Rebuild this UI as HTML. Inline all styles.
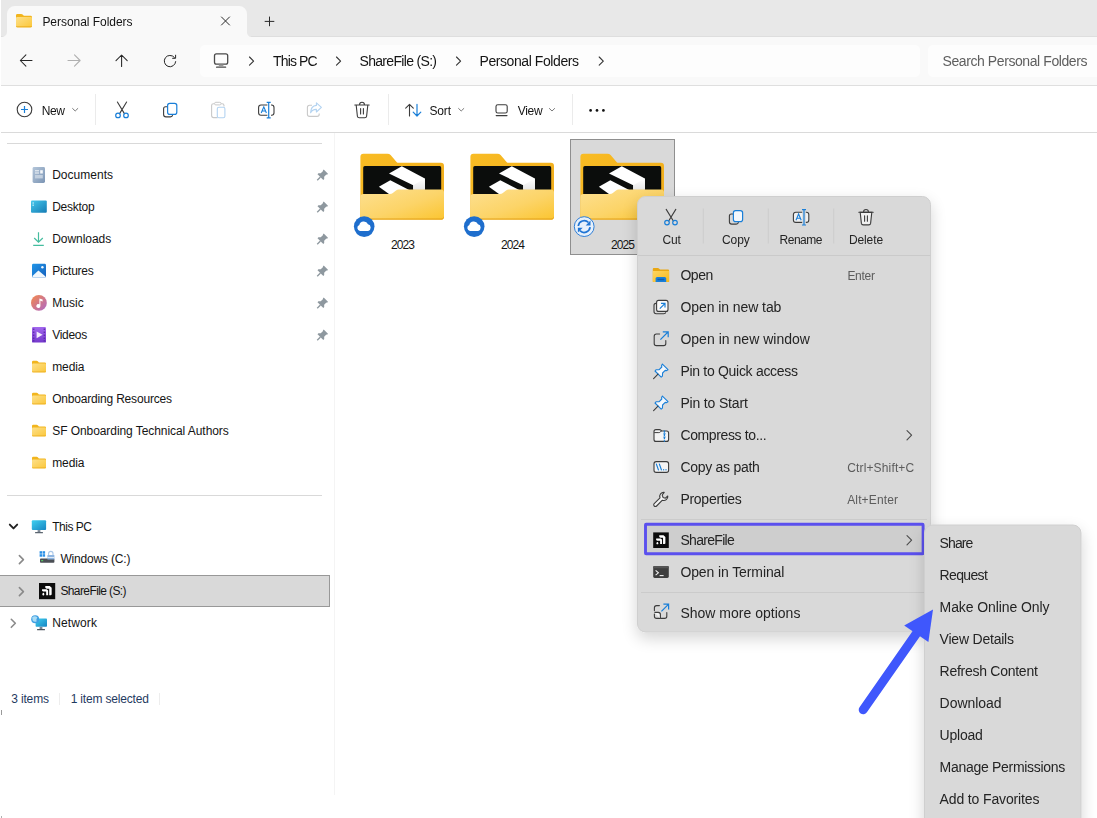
<!DOCTYPE html>
<html><head><meta charset="utf-8"><title>Personal Folders</title>
<style>
*{box-sizing:border-box;margin:0;padding:0}
html,body{width:1097px;height:818px;overflow:hidden;background:#fff}
body{font-family:"Liberation Sans",sans-serif;position:relative}
.t{position:absolute;white-space:nowrap}
svg.L{position:absolute;left:0;top:0;width:1097px;height:818px;overflow:hidden}
.ly{position:absolute;left:0;top:0;width:1097px;height:818px}
</style></head><body>
<div class="ly">
<svg class="L" viewBox="0 0 1097 818">
<defs>
<linearGradient id="gFold" x1="0" y1="0" x2="1" y2="1"><stop offset="0" stop-color="#fde08a"/><stop offset="1" stop-color="#fbc73a"/></linearGradient>
<linearGradient id="gBack" x1="0" y1="0" x2="1" y2="1"><stop offset="0" stop-color="#f9bc24"/><stop offset="1" stop-color="#eda91a"/></linearGradient>
<linearGradient id="gFront" x1="0" y1="0" x2="1" y2="1"><stop offset="0" stop-color="#fde091"/><stop offset=".55" stop-color="#fcd468"/><stop offset="1" stop-color="#fbc530"/></linearGradient>
<linearGradient id="gLogoSh" x1="0" y1="0" x2="0" y2="1"><stop offset="0" stop-color="#fff"/><stop offset="1" stop-color="#e6e6e6"/></linearGradient>
<linearGradient id="gDoc" x1="0" y1="0" x2="1" y2="1"><stop offset="0" stop-color="#b4c6da"/><stop offset="1" stop-color="#7c95b4"/></linearGradient>
<linearGradient id="gDesk" x1="0" y1="0" x2="1" y2="1"><stop offset="0" stop-color="#45c8ec"/><stop offset="1" stop-color="#157bb4"/></linearGradient>
<linearGradient id="gPic" x1="0" y1="0" x2="1" y2="1"><stop offset="0" stop-color="#2196e8"/><stop offset="1" stop-color="#1560bd"/></linearGradient>
<linearGradient id="gMus" x1="0" y1="0" x2="1" y2="1"><stop offset="0" stop-color="#f6894a"/><stop offset="1" stop-color="#ad68c8"/></linearGradient>
<linearGradient id="gVid" x1="0" y1="0" x2="0" y2="1"><stop offset="0" stop-color="#a268ee"/><stop offset="1" stop-color="#7438cc"/></linearGradient>
<linearGradient id="gMon" x1="0" y1="0" x2="1" y2="1"><stop offset="0" stop-color="#3fd0f0"/><stop offset="1" stop-color="#1785c2"/></linearGradient>
</defs>
<rect x="0" y="0" width="1097" height="818" fill="#fff"/>
<rect x="1" y="0" width="1096" height="36" fill="#e8e8e8"/>
<rect x="1" y="36" width="1096" height="1" fill="#dedede"/>
<rect x="1" y="37" width="1096" height="48" fill="#f9f9f9"/>
<path d="M2 37 A5 5 0 0 0 7 32 V14 A8 8 0 0 1 15 6 H239 A8 8 0 0 1 247 14 V32.5 A4.2 4.2 0 0 0 251.2 36.7 V37Z" fill="#f9f9f9"/>
<rect x="1" y="85" width="1096" height="1" fill="#dfdfdf"/>
<rect x="1" y="132" width="1096" height="1" fill="#dadada"/>
<rect x="200" y="45" width="720" height="32" rx="5" fill="#fdfdfd"/>
<rect x="928" y="45" width="180" height="32" rx="5" fill="#fdfdfd"/>
<g transform="translate(16,14) scale(1.1428571428571428)">
<path d="M0 1.2 Q0 0 1.2 0 H4.6 Q5.3 0 5.8 .5 L6.9 1.6 H12.8 Q14 1.6 14 2.8 V10.3 Q14 11.5 12.8 11.5 H1.2 Q0 11.5 0 10.3Z" fill="#f2b51d"/>
<path d="M0 3.6 Q0 2.6 1 2.6 H13 Q14 2.6 14 3.6 V10.3 Q14 11.5 12.8 11.5 H1.2 Q0 11.5 0 10.3Z" fill="url(#gFold)"/>
<rect x="0" y="10.7" width="14" height=".8" rx=".4" fill="#e8a818" opacity=".8"/>
</g>
<path d="M221.2 16.7 L229.8 25.3 M229.8 16.7 L221.2 25.3" stroke="#2a2a2a" stroke-width="1" fill="none"/>
<path d="M264.7 21.4 H274.3 M269.5 16.6 V26.2" stroke="#2a2a2a" stroke-width="1" fill="none"/>
<g fill="none" stroke="#262626" stroke-width="1.05" stroke-linecap="round" stroke-linejoin="round">
<path d="M32 60.5 H20.4 M25.9 54.9 L20.3 60.5 L25.9 66.1"/>
<path d="M121.6 66.4 V55 M116 60.6 L121.6 55 L127.2 60.6"/>
<path d="M175.7 61.6 A5.7 5.7 0 1 1 174.4 57.4" stroke-width="1"/>
<path d="M175.6 55.2 V58.3 H172.6" stroke-width="1"/>
</g>
<path d="M68 60.5 H80 M74.5 54.9 L80.1 60.5 L74.5 66.1" fill="none" stroke="#b0b0b0" stroke-width="1.1" stroke-linecap="round" stroke-linejoin="round"/>
<g fill="none" stroke="#4a4a4a" stroke-width="1.3" stroke-linecap="round"><rect x="214.5" y="53.8" width="13.2" height="10.3" rx="1.9"/><path d="M216.6 67.2 H225.6"/></g>
<rect x="218.8" y="64.6" width="4.6" height="2.2" fill="#9a9a9a"/>
<path d="M249.5 57 L253.6 61.1 L249.5 65.2" fill="none" stroke="#333" stroke-width="1.1" stroke-linecap="round" stroke-linejoin="round"/>
<path d="M336.5 57 L340.6 61.1 L336.5 65.2" fill="none" stroke="#333" stroke-width="1.1" stroke-linecap="round" stroke-linejoin="round"/>
<path d="M456.5 57 L460.6 61.1 L456.5 65.2" fill="none" stroke="#333" stroke-width="1.1" stroke-linecap="round" stroke-linejoin="round"/>
<path d="M599.2 57 L603.3000000000001 61.1 L599.2 65.2" fill="none" stroke="#333" stroke-width="1.1" stroke-linecap="round" stroke-linejoin="round"/>
<circle cx="24.5" cy="109.5" r="7.3" fill="none" stroke="#3c3c3c" stroke-width="1.1"/>
<path d="M21 109.5 H28 M24.5 106 V113" stroke="#1a7fd8" stroke-width="1.2" fill="none"/>
<path d="M72.60000000000001 108.5 L75.2 111 L77.8 108.5" fill="none" stroke="#7a7a7a" stroke-width="1" stroke-linecap="round" stroke-linejoin="round"/>
<path d="M458.59999999999997 108.5 L461.2 111 L463.8 108.5" fill="none" stroke="#7a7a7a" stroke-width="1" stroke-linecap="round" stroke-linejoin="round"/>
<path d="M549.4 108.5 L552 111 L554.6 108.5" fill="none" stroke="#7a7a7a" stroke-width="1" stroke-linecap="round" stroke-linejoin="round"/>
<rect x="95.0" y="94" width="1" height="31" fill="#ebebeb"/>
<rect x="388.0" y="94" width="1" height="31" fill="#ebebeb"/>
<rect x="572.0" y="94" width="1" height="31" fill="#ebebeb"/>
<path d="M117.4 102 L124.4 113.6 M126.6 102 L119.6 113.6" stroke="#3c3c3c" stroke-width="1.1" fill="none" stroke-linecap="round"/>
<circle cx="118" cy="115.4" r="2.3" fill="none" stroke="#1a7fd8" stroke-width="1.2"/><circle cx="126" cy="115.4" r="2.3" fill="none" stroke="#1a7fd8" stroke-width="1.2"/>
<path d="M166.8 106.8 H165.6 Q163.6 106.8 163.6 108.8 V114.6 Q163.6 116.9 165.9 116.9 H170.4 Q172.4 116.9 172.6 115" fill="none" stroke="#3c3c3c" stroke-width="1.1" stroke-linecap="round"/>
<rect x="167.6" y="103.4" width="9.2" height="11" rx="2.2" fill="none" stroke="#1a7fd8" stroke-width="1.2"/>
<path d="M217.5 117.6 H213.6 Q211.6 117.6 211.6 115.6 V105.6 Q211.6 103.8 213.4 103.8 H214.4 M221.2 103.8 H222.2 Q224 103.8 224 105.6 V106.5" fill="none" stroke="#c9c9c9" stroke-width="1.1"/>
<rect x="214.6" y="102.3" width="6.4" height="2.6" rx="1.2" fill="none" stroke="#c9c9c9" stroke-width="1"/>
<rect x="217.3" y="107.2" width="7.6" height="10.6" rx="1.6" fill="none" stroke="#b3d3f1" stroke-width="1.1"/>
<path d="M267.4 105 H261 Q258.6 105 258.6 107.4 V112.8 Q258.6 115.2 261 115.2 H267.4 M271 105 H271.6 Q274 105 274 107.4 V112.8 Q274 115.2 271.6 115.2 H271" fill="none" stroke="#3c3c3c" stroke-width="1.1"/>
<path d="M268.7 102.4 V117.8 M266.7 102.4 H270.7 M266.7 117.8 H270.7" fill="none" stroke="#1a7fd8" stroke-width="1.2"/>
<path d="M261.2 113 L263.8 106.8 L266.4 113 M262.1 111 H265.5" fill="none" stroke="#1a7fd8" stroke-width="1.1"/>
<path d="M312 105.2 H309.6 Q307.4 105.2 307.4 107.4 V114.2 Q307.4 116.4 309.6 116.4 H317 Q319.2 116.4 319.2 114.2 V113.6" fill="none" stroke="#c9c9c9" stroke-width="1.1"/>
<path d="M316.4 102.8 L321.4 107.4 L316.4 112 V109.4 Q312.4 109.2 310.6 112.8 Q310.8 105.8 316.4 105.4Z" fill="none" stroke="#b3d3f1" stroke-width="1.1" stroke-linejoin="round"/>
<g fill="none" stroke="#3c3c3c" stroke-width="1.1" stroke-linecap="round"><path d="M354.8 105 H369.2 M359.6 104.6 Q359.6 102.3 362 102.3 Q364.4 102.3 364.4 104.6 M356.2 105.2 L357.4 116.2 Q357.6 117.7 359.2 117.7 H364.8 Q366.4 117.7 366.6 116.2 L367.8 105.2 M360.6 108.6 V114 M363.4 108.6 V114"/></g>
<path d="M409.5 116 V104.4 M405.7 108.2 L409.5 104.4 L413.3 108.2" fill="none" stroke="#3c3c3c" stroke-width="1.1" stroke-linecap="round" stroke-linejoin="round"/>
<path d="M417 104.4 V116 M413.2 112.2 L417 116 L420.8 112.2" fill="none" stroke="#1a7fd8" stroke-width="1.2" stroke-linecap="round" stroke-linejoin="round"/>
<rect x="496" y="104.8" width="11.2" height="8.2" rx="1.8" fill="none" stroke="#3c3c3c" stroke-width="1.1"/><path d="M496.2 115.6 H507" stroke="#3c3c3c" stroke-width="1.1" fill="none" stroke-linecap="round"/>
<circle cx="590.6" cy="110.4" r="1.35" fill="#111"/>
<circle cx="597" cy="110.4" r="1.35" fill="#111"/>
<circle cx="603.4" cy="110.4" r="1.35" fill="#111"/>
<rect x="7" y="143" width="315" height="1" fill="#d9d9d9"/>
<rect x="7" y="495" width="315" height="1" fill="#d9d9d9"/>
<rect x="334" y="133" width="1" height="662" fill="#f4f4f4"/>
<rect x="1" y="816" width="1" height="2" fill="#b0b0b0"/>
<rect x="-1" y="575.5" width="330.5" height="31" fill="#d9d9d9" stroke="#989898" stroke-width="1"/>
<rect x="32.6" y="167" width="12.4" height="16" rx="1.4" fill="url(#gDoc)"/>
<path d="M35 170.8 H39 M35 173 H39" stroke="#f4f7fa" stroke-width="1" fill="none"/><rect x="40.2" y="170.2" width="2.6" height="3.3" fill="#f4f7fa"/><rect x="35" y="175" width="7.8" height="3.4" fill="#c3d0df"/>
<rect x="31" y="200.6" width="15.8" height="12.2" rx="1" fill="url(#gDesk)"/><rect x="32.4" y="202.4" width="1.6" height="1.2" fill="#b7ecfa"/><rect x="32.4" y="204.6" width="1.6" height="1.2" fill="#b7ecfa"/>
<path d="M38.5 232.3 V242 M34.2 238 L38.5 242.2 L42.8 238 M33.2 245.4 H43.8" fill="none" stroke="#45bd9f" stroke-width="1.2"/>
<rect x="32" y="263.8" width="14" height="13.8" rx="1.4" fill="url(#gPic)"/><path d="M32.4 276 L38.4 270.6 L45.6 276.6 Q45.4 277.6 44.6 277.6 H33.4 Q32.4 277.6 32.4 276Z" fill="#f2f8fd"/><circle cx="42.4" cy="267.2" r="1.2" fill="#f2f8fd"/>
<circle cx="38.9" cy="302.9" r="7.9" fill="url(#gMus)"/><path d="M39.4 298.6 L42.6 299.6 V301.4 L40.4 300.8 V306 A2 2 0 1 1 39.4 304.3Z" fill="#fff"/>
<rect x="32" y="327" width="14" height="15.6" rx="1.2" fill="url(#gVid)"/><path d="M36.6 331.4 L42.6 334.8 L36.6 338.2Z" fill="#f3ecfd"/>
<rect x="32.9" y="328.6" width="1.5" height="1.3" fill="#5b2aa8"/><rect x="43.6" y="328.6" width="1.5" height="1.3" fill="#5b2aa8"/>
<rect x="32.9" y="331.6" width="1.5" height="1.3" fill="#5b2aa8"/><rect x="43.6" y="331.6" width="1.5" height="1.3" fill="#5b2aa8"/>
<rect x="32.9" y="334.6" width="1.5" height="1.3" fill="#5b2aa8"/><rect x="43.6" y="334.6" width="1.5" height="1.3" fill="#5b2aa8"/>
<rect x="32.9" y="337.6" width="1.5" height="1.3" fill="#5b2aa8"/><rect x="43.6" y="337.6" width="1.5" height="1.3" fill="#5b2aa8"/>
<rect x="32.9" y="340.2" width="1.5" height="1.3" fill="#5b2aa8"/><rect x="43.6" y="340.2" width="1.5" height="1.3" fill="#5b2aa8"/>
<g transform="translate(32,360.8) scale(1.0)">
<path d="M0 1.2 Q0 0 1.2 0 H4.6 Q5.3 0 5.8 .5 L6.9 1.6 H12.8 Q14 1.6 14 2.8 V10.3 Q14 11.5 12.8 11.5 H1.2 Q0 11.5 0 10.3Z" fill="#f2b51d"/>
<path d="M0 3.6 Q0 2.6 1 2.6 H13 Q14 2.6 14 3.6 V10.3 Q14 11.5 12.8 11.5 H1.2 Q0 11.5 0 10.3Z" fill="url(#gFold)"/>
<rect x="0" y="10.7" width="14" height=".8" rx=".4" fill="#e8a818" opacity=".8"/>
</g>
<g transform="translate(32,392.8) scale(1.0)">
<path d="M0 1.2 Q0 0 1.2 0 H4.6 Q5.3 0 5.8 .5 L6.9 1.6 H12.8 Q14 1.6 14 2.8 V10.3 Q14 11.5 12.8 11.5 H1.2 Q0 11.5 0 10.3Z" fill="#f2b51d"/>
<path d="M0 3.6 Q0 2.6 1 2.6 H13 Q14 2.6 14 3.6 V10.3 Q14 11.5 12.8 11.5 H1.2 Q0 11.5 0 10.3Z" fill="url(#gFold)"/>
<rect x="0" y="10.7" width="14" height=".8" rx=".4" fill="#e8a818" opacity=".8"/>
</g>
<g transform="translate(32,424.8) scale(1.0)">
<path d="M0 1.2 Q0 0 1.2 0 H4.6 Q5.3 0 5.8 .5 L6.9 1.6 H12.8 Q14 1.6 14 2.8 V10.3 Q14 11.5 12.8 11.5 H1.2 Q0 11.5 0 10.3Z" fill="#f2b51d"/>
<path d="M0 3.6 Q0 2.6 1 2.6 H13 Q14 2.6 14 3.6 V10.3 Q14 11.5 12.8 11.5 H1.2 Q0 11.5 0 10.3Z" fill="url(#gFold)"/>
<rect x="0" y="10.7" width="14" height=".8" rx=".4" fill="#e8a818" opacity=".8"/>
</g>
<g transform="translate(32,456.8) scale(1.0)">
<path d="M0 1.2 Q0 0 1.2 0 H4.6 Q5.3 0 5.8 .5 L6.9 1.6 H12.8 Q14 1.6 14 2.8 V10.3 Q14 11.5 12.8 11.5 H1.2 Q0 11.5 0 10.3Z" fill="#f2b51d"/>
<path d="M0 3.6 Q0 2.6 1 2.6 H13 Q14 2.6 14 3.6 V10.3 Q14 11.5 12.8 11.5 H1.2 Q0 11.5 0 10.3Z" fill="url(#gFold)"/>
<rect x="0" y="10.7" width="14" height=".8" rx=".4" fill="#e8a818" opacity=".8"/>
</g>
<g transform="translate(321.6,175.9) rotate(45)" fill="#8e989f">
<path d="M-3 -6 H3 V-4.8 L2.4 -4.4 V-1.2 L4.1 .4 V1.7 H-4.1 V.4 L-2.4 -1.2 V-4.4 L-3 -4.8Z"/>
<rect x="-.65" y="1.6" width="1.3" height="4.6"/>
</g>
<g transform="translate(321.6,207.9) rotate(45)" fill="#8e989f">
<path d="M-3 -6 H3 V-4.8 L2.4 -4.4 V-1.2 L4.1 .4 V1.7 H-4.1 V.4 L-2.4 -1.2 V-4.4 L-3 -4.8Z"/>
<rect x="-.65" y="1.6" width="1.3" height="4.6"/>
</g>
<g transform="translate(321.6,239.9) rotate(45)" fill="#8e989f">
<path d="M-3 -6 H3 V-4.8 L2.4 -4.4 V-1.2 L4.1 .4 V1.7 H-4.1 V.4 L-2.4 -1.2 V-4.4 L-3 -4.8Z"/>
<rect x="-.65" y="1.6" width="1.3" height="4.6"/>
</g>
<g transform="translate(321.6,271.90000000000003) rotate(45)" fill="#8e989f">
<path d="M-3 -6 H3 V-4.8 L2.4 -4.4 V-1.2 L4.1 .4 V1.7 H-4.1 V.4 L-2.4 -1.2 V-4.4 L-3 -4.8Z"/>
<rect x="-.65" y="1.6" width="1.3" height="4.6"/>
</g>
<g transform="translate(321.6,303.90000000000003) rotate(45)" fill="#8e989f">
<path d="M-3 -6 H3 V-4.8 L2.4 -4.4 V-1.2 L4.1 .4 V1.7 H-4.1 V.4 L-2.4 -1.2 V-4.4 L-3 -4.8Z"/>
<rect x="-.65" y="1.6" width="1.3" height="4.6"/>
</g>
<g transform="translate(321.6,335.90000000000003) rotate(45)" fill="#8e989f">
<path d="M-3 -6 H3 V-4.8 L2.4 -4.4 V-1.2 L4.1 .4 V1.7 H-4.1 V.4 L-2.4 -1.2 V-4.4 L-3 -4.8Z"/>
<rect x="-.65" y="1.6" width="1.3" height="4.6"/>
</g>
<path d="M9.8 524.6 L13.5 528.4 L17.2 524.6" fill="none" stroke="#222" stroke-width="1.9" stroke-linecap="round" stroke-linejoin="round"/>
<path d="M19.4 555.6 L23.4 559.6 L19.4 563.6" fill="none" stroke="#8a8a8a" stroke-width="1.6" stroke-linecap="round" stroke-linejoin="round"/>
<path d="M19.4 587.6 L23.4 591.6 L19.4 595.6" fill="none" stroke="#8a8a8a" stroke-width="1.6" stroke-linecap="round" stroke-linejoin="round"/>
<path d="M11.3 619.3 L15.3 623.3 L11.3 627.3" fill="none" stroke="#8a8a8a" stroke-width="1.6" stroke-linecap="round" stroke-linejoin="round"/>
<rect x="31.8" y="520.3" width="14.3" height="9.8" rx="1" fill="url(#gMon)"/><rect x="37.6" y="530.1" width="2.8" height="2" fill="#7b8794"/><rect x="35" y="532" width="8" height="1.2" rx=".5" fill="#5c6670"/>
<rect x="39.6" y="551.2" width="2.5" height="2.5" fill="#2a8fe6"/><rect x="42.6" y="551.2" width="2.5" height="2.5" fill="#2a8fe6"/><rect x="39.6" y="554.2" width="2.5" height="2.5" fill="#2a8fe6"/><rect x="42.6" y="554.2" width="2.5" height="2.5" fill="#2a8fe6"/>
<rect x="40" y="558.6" width="14.4" height="4.2" rx=".8" fill="#4b4f55"/><rect x="41.2" y="560.2" width="2" height="1" fill="#5fe06a"/>
<path d="M48.6 555 V553.6 A2.2 2.2 0 0 1 53 553.6 V555" fill="none" stroke="#a9c7e8" stroke-width="1.1"/><rect x="47.4" y="555" width="7" height="4.6" rx=".6" fill="#8fb6e2"/><rect x="47.4" y="557" width="7" height="1" fill="#dfeaf6"/>
<g transform="translate(39,583) scale(1.0125)"><rect width="16" height="16" fill="#0c0c0c"/>
<path d="M6.2 2.9 H10.6 L12.5 4.6 V11.4 L11.7 12 H10.1 V5.6 H7.5 L6.2 4.6Z" fill="#fff"/>
<path d="M3 6.2 H7.6 L9 7.4 V12 H7.1 V8.5 H4 L3 7.7Z" fill="#fff"/>
<ellipse cx="4.3" cy="11" rx=".9" ry="1.25" fill="#fff"/></g>
<rect x="35.6" y="618.4" width="11.4" height="8.4" rx=".8" fill="url(#gMon)"/><rect x="39.6" y="626.8" width="2.8" height="2.2" fill="#7b8794"/><rect x="37" y="629" width="8" height="1.2" rx=".5" fill="#4c565f"/>
<circle cx="35.2" cy="619.2" r="4" fill="#3f9fe2"/><path d="M32.2 617.2 Q35 615.4 37.4 617.4 Q35.8 619 36.6 621.6 Q34 622.4 32.6 620.6Z" fill="#a9dcf5"/>
<rect x="59" y="693" width="1" height="12" fill="#ededed"/><rect x="159" y="693" width="1" height="12" fill="#ededed"/>
<rect x="1" y="710" width="1" height="5" fill="#9a9a9a"/>
<rect x="570.5" y="139.5" width="104" height="115" fill="#d9d9d9" stroke="#8f8f8f" stroke-width="1"/>
<g transform="translate(360.4,153.7)">
<path d="M0 3 Q0 0 3 0 H27 Q29 0 30.2 1.4 L36.4 8.6 Q37 9.1 38 9.1 H80.5 Q83.6 9.1 83.6 12.2 V62.7 Q83.6 65.8 80.5 65.8 H3 Q0 65.8 0 62.7Z" fill="url(#gBack)"/>
<rect x="2.8" y="12.4" width="78" height="40" rx="1.6" fill="#0b0d0c"/>
<path d="M41.4 12.6 L64.5 24.9 V36 H52.8 V31.6 L28.6 19.8Z" fill="#fff"/>
<path d="M29.9 26.5 L48.8 36.3 L29.6 41 L18.5 33Z" fill="#fff"/>
<path d="M52.8 31.6 L64.5 24.9 V36 H52.8Z" fill="url(#gLogoSh)"/>
<path d="M0 43.5 Q0 40.4 3 40.4 H29.5 Q31.2 40.4 32.4 39.4 L35.6 36.7 Q36.8 35.7 38.5 35.7 H80.5 Q83.6 35.7 83.6 38.8 V62.7 Q83.6 65.8 80.5 65.8 H3 Q0 65.8 0 62.7Z" fill="url(#gFront)"/>
<path d="M0 62 V62.7 Q0 65.8 3 65.8 H80.5 Q83.6 65.8 83.6 62.7 V62 Q83.6 64.8 80.5 64.8 H3 Q0 64.8 0 62Z" fill="#e3a21a"/>
</g><circle cx="364.2" cy="226.6" r="10.3" fill="#1e6ecd"/>
<path transform="translate(364.2,226.6)" d="M-4.2 4.3 A3 3 0 0 1 -4.9 -1.5 A4.6 4.6 0 0 1 3.8 -2.3 A3.4 3.4 0 0 1 4 4.3Z" fill="#fff"/>
<g transform="translate(470.4,153.7)">
<path d="M0 3 Q0 0 3 0 H27 Q29 0 30.2 1.4 L36.4 8.6 Q37 9.1 38 9.1 H80.5 Q83.6 9.1 83.6 12.2 V62.7 Q83.6 65.8 80.5 65.8 H3 Q0 65.8 0 62.7Z" fill="url(#gBack)"/>
<rect x="2.8" y="12.4" width="78" height="40" rx="1.6" fill="#0b0d0c"/>
<path d="M41.4 12.6 L64.5 24.9 V36 H52.8 V31.6 L28.6 19.8Z" fill="#fff"/>
<path d="M29.9 26.5 L48.8 36.3 L29.6 41 L18.5 33Z" fill="#fff"/>
<path d="M52.8 31.6 L64.5 24.9 V36 H52.8Z" fill="url(#gLogoSh)"/>
<path d="M0 43.5 Q0 40.4 3 40.4 H29.5 Q31.2 40.4 32.4 39.4 L35.6 36.7 Q36.8 35.7 38.5 35.7 H80.5 Q83.6 35.7 83.6 38.8 V62.7 Q83.6 65.8 80.5 65.8 H3 Q0 65.8 0 62.7Z" fill="url(#gFront)"/>
<path d="M0 62 V62.7 Q0 65.8 3 65.8 H80.5 Q83.6 65.8 83.6 62.7 V62 Q83.6 64.8 80.5 64.8 H3 Q0 64.8 0 62Z" fill="#e3a21a"/>
</g><circle cx="474.2" cy="226.6" r="10.3" fill="#1e6ecd"/>
<path transform="translate(474.2,226.6)" d="M-4.2 4.3 A3 3 0 0 1 -4.9 -1.5 A4.6 4.6 0 0 1 3.8 -2.3 A3.4 3.4 0 0 1 4 4.3Z" fill="#fff"/>
<g transform="translate(580.4,153.7)">
<path d="M0 3 Q0 0 3 0 H27 Q29 0 30.2 1.4 L36.4 8.6 Q37 9.1 38 9.1 H80.5 Q83.6 9.1 83.6 12.2 V62.7 Q83.6 65.8 80.5 65.8 H3 Q0 65.8 0 62.7Z" fill="url(#gBack)"/>
<rect x="2.8" y="12.4" width="78" height="40" rx="1.6" fill="#0b0d0c"/>
<path d="M41.4 12.6 L64.5 24.9 V36 H52.8 V31.6 L28.6 19.8Z" fill="#fff"/>
<path d="M29.9 26.5 L48.8 36.3 L29.6 41 L18.5 33Z" fill="#fff"/>
<path d="M52.8 31.6 L64.5 24.9 V36 H52.8Z" fill="url(#gLogoSh)"/>
<path d="M0 43.5 Q0 40.4 3 40.4 H29.5 Q31.2 40.4 32.4 39.4 L35.6 36.7 Q36.8 35.7 38.5 35.7 H80.5 Q83.6 35.7 83.6 38.8 V62.7 Q83.6 65.8 80.5 65.8 H3 Q0 65.8 0 62.7Z" fill="url(#gFront)"/>
<path d="M0 62 V62.7 Q0 65.8 3 65.8 H80.5 Q83.6 65.8 83.6 62.7 V62 Q83.6 64.8 80.5 64.8 H3 Q0 64.8 0 62Z" fill="#e3a21a"/>
</g><circle cx="584.1999999999999" cy="226.6" r="9.9" fill="#e6f0fb" stroke="#2f7fd8" stroke-width="1"/>
<g transform="translate(584.1999999999999,226.6)" fill="none" stroke="#1f74d4" stroke-width="1.7">
<path d="M-5.9 -.6 A6 6 0 0 1 4.3 -4.1"/>
<path d="M5.9 .6 A6 6 0 0 1 -4.3 4.1"/>
</g>
<g transform="translate(584.1999999999999,226.6)" fill="#1f74d4">
<path d="M6.3 -6 V-1.2 H1.5Z"/>
<path d="M-6.3 6 V1.2 H-1.5Z"/>
</g>
</svg>
<span class="t" style="left:52.20px;top:168.84px;font-size:12px;line-height:12px;color:#141414;letter-spacing:0.012px;">Documents</span>
<span class="t" style="left:52.20px;top:200.84px;font-size:12px;line-height:12px;color:#141414;letter-spacing:-0.255px;">Desktop</span>
<span class="t" style="left:52.20px;top:232.84px;font-size:12px;line-height:12px;color:#141414;letter-spacing:-0.047px;">Downloads</span>
<span class="t" style="left:52.20px;top:264.84px;font-size:12px;line-height:12px;color:#141414;letter-spacing:-0.266px;">Pictures</span>
<span class="t" style="left:52.20px;top:296.84px;font-size:12px;line-height:12px;color:#141414;letter-spacing:0.039px;">Music</span>
<span class="t" style="left:52.20px;top:328.84px;font-size:12px;line-height:12px;color:#141414;letter-spacing:-0.297px;">Videos</span>
<span class="t" style="left:52.20px;top:360.84px;font-size:12px;line-height:12px;color:#141414;letter-spacing:-0.097px;">media</span>
<span class="t" style="left:52.20px;top:392.84px;font-size:12px;line-height:12px;color:#141414;letter-spacing:-0.190px;">Onboarding Resources</span>
<span class="t" style="left:52.20px;top:424.84px;font-size:12px;line-height:12px;color:#141414;letter-spacing:-0.065px;">SF Onboarding Technical Authors</span>
<span class="t" style="left:52.20px;top:456.84px;font-size:12px;line-height:12px;color:#141414;letter-spacing:-0.097px;">media</span>
<span class="t" style="left:52.20px;top:520.84px;font-size:12px;line-height:12px;color:#141414;letter-spacing:-0.481px;">This PC</span>
<span class="t" style="left:52.20px;top:616.84px;font-size:12px;line-height:12px;color:#141414;letter-spacing:0.131px;">Network</span>
<span class="t" style="left:60.40px;top:552.84px;font-size:12px;line-height:12px;color:#141414;letter-spacing:-0.183px;">Windows (C:)</span>
<span class="t" style="left:60.40px;top:584.84px;font-size:12px;line-height:12px;color:#141414;letter-spacing:-0.602px;">ShareFile (S:)</span>
<span class="t" style="left:11.20px;top:692.84px;font-size:12px;line-height:12px;color:#1f3a5f;letter-spacing:-0.148px;">3 items</span>
<span class="t" style="left:70.70px;top:692.84px;font-size:12px;line-height:12px;color:#1f3a5f;letter-spacing:-0.180px;">1 item selected</span>
<span class="t" style="left:391.00px;top:239.34px;font-size:12px;line-height:12px;color:#141414;letter-spacing:-0.901px;">2023</span>
<span class="t" style="left:501.00px;top:239.34px;font-size:12px;line-height:12px;color:#141414;letter-spacing:-0.901px;">2024</span>
<span class="t" style="left:611.00px;top:239.34px;font-size:12px;line-height:12px;color:#141414;letter-spacing:-0.901px;">2025</span>
</div>
<div class="ly" style="will-change:transform">
<span class="t" style="left:42.40px;top:15.84px;font-size:12px;line-height:12px;color:#141414;letter-spacing:-0.035px;">Personal Folders</span>
<span class="t" style="left:273.00px;top:54.15px;font-size:14px;line-height:14px;color:#141414;letter-spacing:-0.849px;">This PC</span>
<span class="t" style="left:359.50px;top:54.15px;font-size:14px;line-height:14px;color:#141414;letter-spacing:-0.681px;">ShareFile (S:)</span>
<span class="t" style="left:479.50px;top:54.15px;font-size:14px;line-height:14px;color:#141414;letter-spacing:-0.422px;">Personal Folders</span>
<span class="t" style="left:942.50px;top:54.15px;font-size:14px;line-height:14px;color:#5e5e5e;letter-spacing:-0.413px;">Search Personal Folders</span>
<span class="t" style="left:41.70px;top:104.84px;font-size:12px;line-height:12px;color:#141414;letter-spacing:-0.358px;">New</span>
<span class="t" style="left:429.50px;top:104.84px;font-size:12px;line-height:12px;color:#141414;letter-spacing:-0.172px;">Sort</span>
<span class="t" style="left:517.70px;top:104.84px;font-size:12px;line-height:12px;color:#141414;letter-spacing:-0.266px;">View</span>
</div>
<div class="ly" style="will-change:transform">
<svg class="L" viewBox="0 0 1097 818">
<defs>
<filter id="sh" x="-20%" y="-20%" width="140%" height="140%"><feGaussianBlur in="SourceAlpha" stdDeviation="8"/><feOffset dy="6"/><feComponentTransfer><feFuncA type="linear" slope=".17"/></feComponentTransfer><feMerge><feMergeNode/><feMergeNode in="SourceGraphic"/></feMerge></filter>
<linearGradient id="gOF" x1="0" y1="0" x2="1" y2="1"><stop offset="0" stop-color="#fdd560"/><stop offset="1" stop-color="#f8b91c"/></linearGradient>
</defs>
<rect x="637.5" y="196.5" width="293" height="435.5" rx="8" fill="#d9d9d9" stroke="#cfcfcf" stroke-width="1" filter="url(#sh)"/>
<rect x="702.8" y="208.5" width="1" height="35" fill="#cdcdcd"/>
<rect x="767.8" y="208.5" width="1" height="35" fill="#cdcdcd"/>
<rect x="833.2" y="208.5" width="1" height="35" fill="#cdcdcd"/>
<rect x="638" y="255" width="292.5" height="1" fill="#cacaca"/>
<rect x="641" y="519" width="286" height="1" fill="#cbcbcb"/>
<rect x="641" y="592" width="286" height="1" fill="#cbcbcb"/>
<path d="M666.2 209.4 L673.2 220.8 M675.8 209.4 L668.8 220.8" stroke="#3c3c3c" stroke-width="1.1" fill="none" stroke-linecap="round"/>
<circle cx="667" cy="222.6" r="2.3" fill="none" stroke="#1a7fd8" stroke-width="1.2"/><circle cx="675" cy="222.6" r="2.3" fill="none" stroke="#1a7fd8" stroke-width="1.2"/>
<path d="M732.6 214 H731.4 Q729.4 214 729.4 216 V221.8 Q729.4 224.1 731.7 224.1 H736.2 Q738.2 224.1 738.4 222.2" fill="none" stroke="#3c3c3c" stroke-width="1.1" stroke-linecap="round"/>
<rect x="733.4" y="210.6" width="9.2" height="11" rx="2.2" fill="#f4f8fc" stroke="#1a7fd8" stroke-width="1.2"/>
<path d="M802.2 212.2 H795.8 Q793.4 212.2 793.4 214.6 V220 Q793.4 222.4 795.8 222.4 H802.2 M805.8 212.2 H806.4 Q808.8 212.2 808.8 214.6 V220 Q808.8 222.4 806.4 222.4 H805.8" fill="#f0f0f0" stroke="#3c3c3c" stroke-width="1.1"/>
<path d="M804 209.6 V225 M802 209.6 H806 M802 225 H806" fill="none" stroke="#1a7fd8" stroke-width="1.2"/>
<path d="M796 220.2 L798.6 214 L801.2 220.2 M796.9 218.2 H800.3" fill="none" stroke="#1a7fd8" stroke-width="1.1"/>
<g transform="translate(504,107.2)" fill="none" stroke="#3c3c3c" stroke-width="1.1" stroke-linecap="round"><path d="M356.2 105.2 L357.4 116.2 Q357.6 117.7 359.2 117.7 H364.8 Q366.4 117.7 366.6 116.2 L367.8 105.2Z" fill="#f0f0f0"/><path d="M354.8 105 H369.2 M359.6 104.6 Q359.6 102.3 362 102.3 Q364.4 102.3 364.4 104.6 M360.6 108.6 V114 M363.4 108.6 V114"/></g>
<g transform="translate(652.8,268)"><path d="M0 1 Q0 0 1 0 H5 Q5.7 0 6.2 .5 L7.2 1.5 H15.3 Q16.3 1.5 16.3 2.5 V14 H0Z" fill="#e9a712"/><path d="M0 3 H16.3 V13 Q16.3 14 15.3 14 H1 Q0 14 0 13Z" fill="url(#gOF)"/><path d="M2.8 14 V10.6 Q2.8 9 4.4 9 H11.8 Q13.4 9 13.4 10.6 V14Z" fill="#1a7fd8"/><rect x="4.6" y="10.8" width="7" height="1.4" rx=".7" fill="#0f5fae"/></g>
<path d="M656.4 303.4 H656 Q654 303.4 654 305.4 V311.6 Q654 313.8 656.2 313.8 H663.6 Q665.6 313.8 665.8 312.2" fill="none" stroke="#3c3c3c" stroke-width="1.1"/>
<rect x="656.6" y="300.4" width="11.4" height="11" rx="2" fill="#fafafa" stroke="#3c3c3c" stroke-width="1.1"/>
<path d="M659.8 308.6 L664.8 303.6 M661 303.4 H665 V307.4" fill="none" stroke="#1a7fd8" stroke-width="1.2"/>
<path d="M659.6 334 H656.4 Q654.2 334 654.2 336.2 V343.4 Q654.2 345.6 656.4 345.6 H663.6 Q665.8 345.6 665.8 343.4 V340.6" fill="none" stroke="#3c3c3c" stroke-width="1.1" stroke-linecap="round"/>
<path d="M660.4 339.6 L668 332 M662.8 331.8 H668.2 V337.2" fill="none" stroke="#1a7fd8" stroke-width="1.2"/>
<g transform="translate(653,363.2)">
<path d="M9.4 .9 L15 6.5 L13.6 7.4 L12.2 7.2 L9.6 9.8 L9.4 13 L8.2 14 L2 7.8 L3 6.6 L6.2 6.4 L8.8 3.8 L8.6 2.4Z" fill="#f4f8fc" stroke="#1a7fd8" stroke-width="1.1" stroke-linejoin="round"/>
<path d="M5 11 L.6 15.4" stroke="#3c3c3c" stroke-width="1.1" stroke-linecap="round"/></g>
<g transform="translate(653,395.2)">
<path d="M9.4 .9 L15 6.5 L13.6 7.4 L12.2 7.2 L9.6 9.8 L9.4 13 L8.2 14 L2 7.8 L3 6.6 L6.2 6.4 L8.8 3.8 L8.6 2.4Z" fill="#f4f8fc" stroke="#1a7fd8" stroke-width="1.1" stroke-linejoin="round"/>
<path d="M5 11 L.6 15.4" stroke="#3c3c3c" stroke-width="1.1" stroke-linecap="round"/></g>
<path d="M654 431.6 Q654 429.6 656 429.6 H659.4 Q660.2 429.6 660.8 430.2 L661.6 431 H666.6 Q668.6 431 668.6 433 V439.4 Q668.6 441.4 666.6 441.4 H656 Q654 441.4 654 439.4Z" fill="#f4f4f4" stroke="#3c3c3c" stroke-width="1.1"/>
<path d="M654.2 432.6 H658.8 Q659.8 432.6 660.4 432 L661.4 431" fill="none" stroke="#3c3c3c" stroke-width="1"/>
<path d="M664.4 430.6 V441.8" stroke="#1a7fd8" stroke-width="1.3" stroke-dasharray="2.2 1" fill="none"/><path d="M663.4 433.8 H665.6 M663.4 437 H665.6" stroke="#1a7fd8" stroke-width="1" fill="none"/>
<rect x="654" y="461.6" width="14.6" height="10.8" rx="2.2" fill="#f4f4f4" stroke="#3c3c3c" stroke-width="1.1"/>
<path d="M656.2 463.6 L658.6 470.4 M659.2 463.6 L661.6 470.4" stroke="#1a7fd8" stroke-width="1.2" fill="none"/><rect x="663" y="469.2" width="1.2" height="1.2" fill="#1a7fd8"/><rect x="665.4" y="469.2" width="1.2" height="1.2" fill="#1a7fd8"/>
<path d="M664.2 492.4 A4 4 0 0 0 660 497.8 L654.2 503.6 A1.6 1.6 0 0 0 656.6 506 L662.4 500.2 A4 4 0 0 0 667.8 496 L665.4 498.2 L663 497.4 L662.2 495 Z" fill="#f2f2f2" stroke="#3c3c3c" stroke-width="1.1" stroke-linejoin="round"/>
<rect x="645.5" y="524.3" width="277.6" height="29.5" rx=".6" fill="#cecece" stroke="#5b50ee" stroke-width="2.9"/>
<g transform="translate(653.2,532.4) scale(0.975)"><rect width="16" height="16" fill="#0c0c0c"/>
<path d="M6.2 2.9 H10.6 L12.5 4.6 V11.4 L11.7 12 H10.1 V5.6 H7.5 L6.2 4.6Z" fill="#fff"/>
<path d="M3 6.2 H7.6 L9 7.4 V12 H7.1 V8.5 H4 L3 7.7Z" fill="#fff"/>
<ellipse cx="4.3" cy="11" rx=".9" ry="1.25" fill="#fff"/></g>
<rect x="653.2" y="566" width="15.6" height="12" rx="1.4" fill="#3e3e3e"/><rect x="653.2" y="566" width="15.6" height="2.2" rx="1" fill="#555"/><path d="M655.6 570.4 L658.4 572.8 L655.6 575.2" fill="none" stroke="#f2f2f2" stroke-width="1.1"/><path d="M659.6 575.6 H663.6" stroke="#f2f2f2" stroke-width="1.1"/>
<path d="M659.4 605.6 H656.6 Q654.4 605.6 654.4 607.8 V610.6 M654.4 614 V616.2 Q654.4 618.4 656.6 618.4 H664.6 Q666.8 618.4 666.8 616.2 V612.6" fill="none" stroke="#3c3c3c" stroke-width="1.1" stroke-linecap="round"/>
<path d="M654.4 612.4 H658.2 Q660.4 612.4 660.4 614.6 V618.4" fill="#f4f4f4" stroke="#3c3c3c" stroke-width="1.1"/>
<path d="M661.4 611.4 L668.4 604.4 M663.4 604.2 H668.6 V609.4" fill="none" stroke="#1a7fd8" stroke-width="1.2"/>
<path d="M907 430.59999999999997 L911.6 435.2 L907 439.8" fill="none" stroke="#4a4a4a" stroke-width="1.1" stroke-linecap="round" stroke-linejoin="round"/>
<path d="M907 535.6 L911.6 540.2 L907 544.8000000000001" fill="none" stroke="#4a4a4a" stroke-width="1.1" stroke-linecap="round" stroke-linejoin="round"/>
<rect x="924.5" y="525" width="156.5" height="320" rx="8" fill="#d9d9d9" stroke="#cfcfcf" stroke-width="1" filter="url(#sh)"/>
</svg>
<span class="t" style="left:662.40px;top:233.84px;font-size:12px;line-height:12px;color:#242424;letter-spacing:-0.094px;">Cut</span>
<span class="t" style="left:722.00px;top:233.84px;font-size:12px;line-height:12px;color:#242424;letter-spacing:-0.072px;">Copy</span>
<span class="t" style="left:779.50px;top:233.84px;font-size:12px;line-height:12px;color:#242424;letter-spacing:-0.472px;">Rename</span>
<span class="t" style="left:848.90px;top:233.84px;font-size:12px;line-height:12px;color:#242424;letter-spacing:-0.097px;">Delete</span>
<span class="t" style="left:680.40px;top:268.15px;font-size:14px;line-height:14px;color:#242424;letter-spacing:-0.417px;">Open</span>
<span class="t" style="left:680.40px;top:300.15px;font-size:14px;line-height:14px;color:#242424;letter-spacing:-0.069px;">Open in new tab</span>
<span class="t" style="left:680.40px;top:332.15px;font-size:14px;line-height:14px;color:#242424;letter-spacing:0.024px;">Open in new window</span>
<span class="t" style="left:680.40px;top:364.15px;font-size:14px;line-height:14px;color:#242424;letter-spacing:-0.297px;">Pin to Quick access</span>
<span class="t" style="left:680.40px;top:396.15px;font-size:14px;line-height:14px;color:#242424;letter-spacing:-0.170px;">Pin to Start</span>
<span class="t" style="left:680.40px;top:428.15px;font-size:14px;line-height:14px;color:#242424;letter-spacing:-0.372px;">Compress to...</span>
<span class="t" style="left:680.40px;top:460.15px;font-size:14px;line-height:14px;color:#242424;letter-spacing:-0.282px;">Copy as path</span>
<span class="t" style="left:680.40px;top:492.15px;font-size:14px;line-height:14px;color:#242424;letter-spacing:-0.268px;">Properties</span>
<span class="t" style="left:680.40px;top:532.95px;font-size:14px;line-height:14px;color:#242424;letter-spacing:-0.690px;">ShareFile</span>
<span class="t" style="left:680.40px;top:565.15px;font-size:14px;line-height:14px;color:#242424;letter-spacing:-0.105px;">Open in Terminal</span>
<span class="t" style="left:680.40px;top:606.15px;font-size:14px;line-height:14px;color:#242424;letter-spacing:0.010px;">Show more options</span>
<span class="t" style="left:847.40px;top:269.84px;font-size:12px;line-height:12px;color:#5c5c5c;letter-spacing:-0.297px;">Enter</span>
<span class="t" style="left:847.20px;top:461.84px;font-size:12px;line-height:12px;color:#5c5c5c;letter-spacing:0.149px;">Ctrl+Shift+C</span>
<span class="t" style="left:847.20px;top:493.84px;font-size:12px;line-height:12px;color:#5c5c5c;letter-spacing:0.137px;">Alt+Enter</span>
<span class="t" style="left:939.60px;top:536.15px;font-size:14px;line-height:14px;color:#242424;letter-spacing:-0.890px;">Share</span>
<span class="t" style="left:939.60px;top:568.15px;font-size:14px;line-height:14px;color:#242424;letter-spacing:-0.659px;">Request</span>
<span class="t" style="left:939.60px;top:600.15px;font-size:14px;line-height:14px;color:#242424;letter-spacing:-0.085px;">Make Online Only</span>
<span class="t" style="left:939.60px;top:632.15px;font-size:14px;line-height:14px;color:#242424;letter-spacing:-0.216px;">View Details</span>
<span class="t" style="left:939.60px;top:664.15px;font-size:14px;line-height:14px;color:#242424;letter-spacing:-0.268px;">Refresh Content</span>
<span class="t" style="left:939.60px;top:696.15px;font-size:14px;line-height:14px;color:#242424;letter-spacing:-0.038px;">Download</span>
<span class="t" style="left:939.60px;top:728.15px;font-size:14px;line-height:14px;color:#242424;letter-spacing:-0.235px;">Upload</span>
<span class="t" style="left:939.60px;top:760.15px;font-size:14px;line-height:14px;color:#242424;letter-spacing:-0.296px;">Manage Permissions</span>
<span class="t" style="left:939.60px;top:792.15px;font-size:14px;line-height:14px;color:#242424;letter-spacing:-0.136px;">Add to Favorites</span>
</div>
<div class="ly">
<svg class="L" viewBox="0 0 1097 818">
<path d="M863.2 709.8 L916.5 633.4" stroke="#3f57fc" stroke-width="9" stroke-linecap="round" fill="none"/>
<path d="M933 609.5 L904.2 625.5 L928.4 642Z" fill="#3f57fc"/>
</svg>
</div>
</body></html>
